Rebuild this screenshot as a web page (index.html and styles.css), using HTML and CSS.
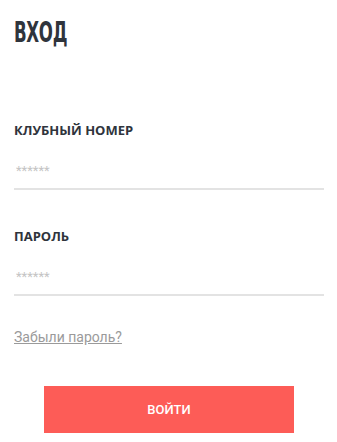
FILE: index.html
```html
<!DOCTYPE html>
<html lang="ru">
<head>
  <meta charset="UTF-8">
  <title>Вход</title>
  <link rel="stylesheet" href="styles.css">
</head>
<body>
  <div class="login">
    <!-- Заголовок -->
    <h1 class="title">ВХОД</h1>

    <!-- Форма входа -->
    <form class="form">
      <div class="field">
        <label class="field-label" for="club">КЛУБНЫЙ НОМЕР</label>
        <input class="field-input" id="club" type="text" placeholder="******">
      </div>
      <div class="field">
        <label class="field-label" for="pass">ПАРОЛЬ</label>
        <input class="field-input" id="pass" type="password" placeholder="******">
      </div>

      <a class="forgot" href="#">Забыли пароль?</a>

      <div class="actions">
        <button class="btn" type="button">ВОЙТИ</button>
      </div>
    </form>
  </div>
</body>
</html>
```

FILE: styles.css
```css
body {
  margin: 0;
  padding: 0;
  background-color: #fff;
  font-family: Roboto, Arial, sans-serif;
  color: #333842;
}

.login {
  padding: 18px 13px 0 14px;
}

/* Заголовок */
.title {
  display: inline-block;
  margin: 0;
  font-family: "DejaVu Sans", sans-serif;
  font-stretch: condensed;
  font-size: 28px;
  font-weight: bold;
  line-height: 30px;
  letter-spacing: -0.5px;
  color: #2f343c;
  transform: scale(0.66, 1.02);
  transform-origin: left center;
}

.form {
  margin-top: 73px;
}

/* Поля */
.field {
  margin-bottom: 37px;
}

.field-label {
  display: block;
  font-family: "Open Sans", Arial, sans-serif;
  font-size: 13px;
  font-weight: bold;
  color: #2f343c;
  line-height: 18px;
}

.field-input {
  display: block;
  width: 100%;
  box-sizing: border-box;
  margin-top: 16px;
  padding: 8px 2px 10px;
  border: 0;
  border-bottom: 2px solid #e3e3e3;
  outline: none;
  font-family: Roboto, Arial, sans-serif;
  font-size: 13px;
  color: #333;
  background: transparent;
}

.field-input::placeholder {
  color: #c4c4c4;
}

/* Ссылка восстановления */
.forgot {
  display: block;
  width: fit-content;
  margin-top: -4px;
  font-size: 14px;
  line-height: 16px;
  color: #9a9a9a;
  text-decoration: underline;
}

.actions {
  display: flex;
  justify-content: center;
  margin-top: 41px;
}

.btn {
  width: 250px;
  height: 47px;
  border: 0;
  background-color: #fd5c57;
  color: #fff;
  font-family: Roboto, Arial, sans-serif;
  font-size: 13px;
  font-weight: 500;
  cursor: pointer;
}
```
